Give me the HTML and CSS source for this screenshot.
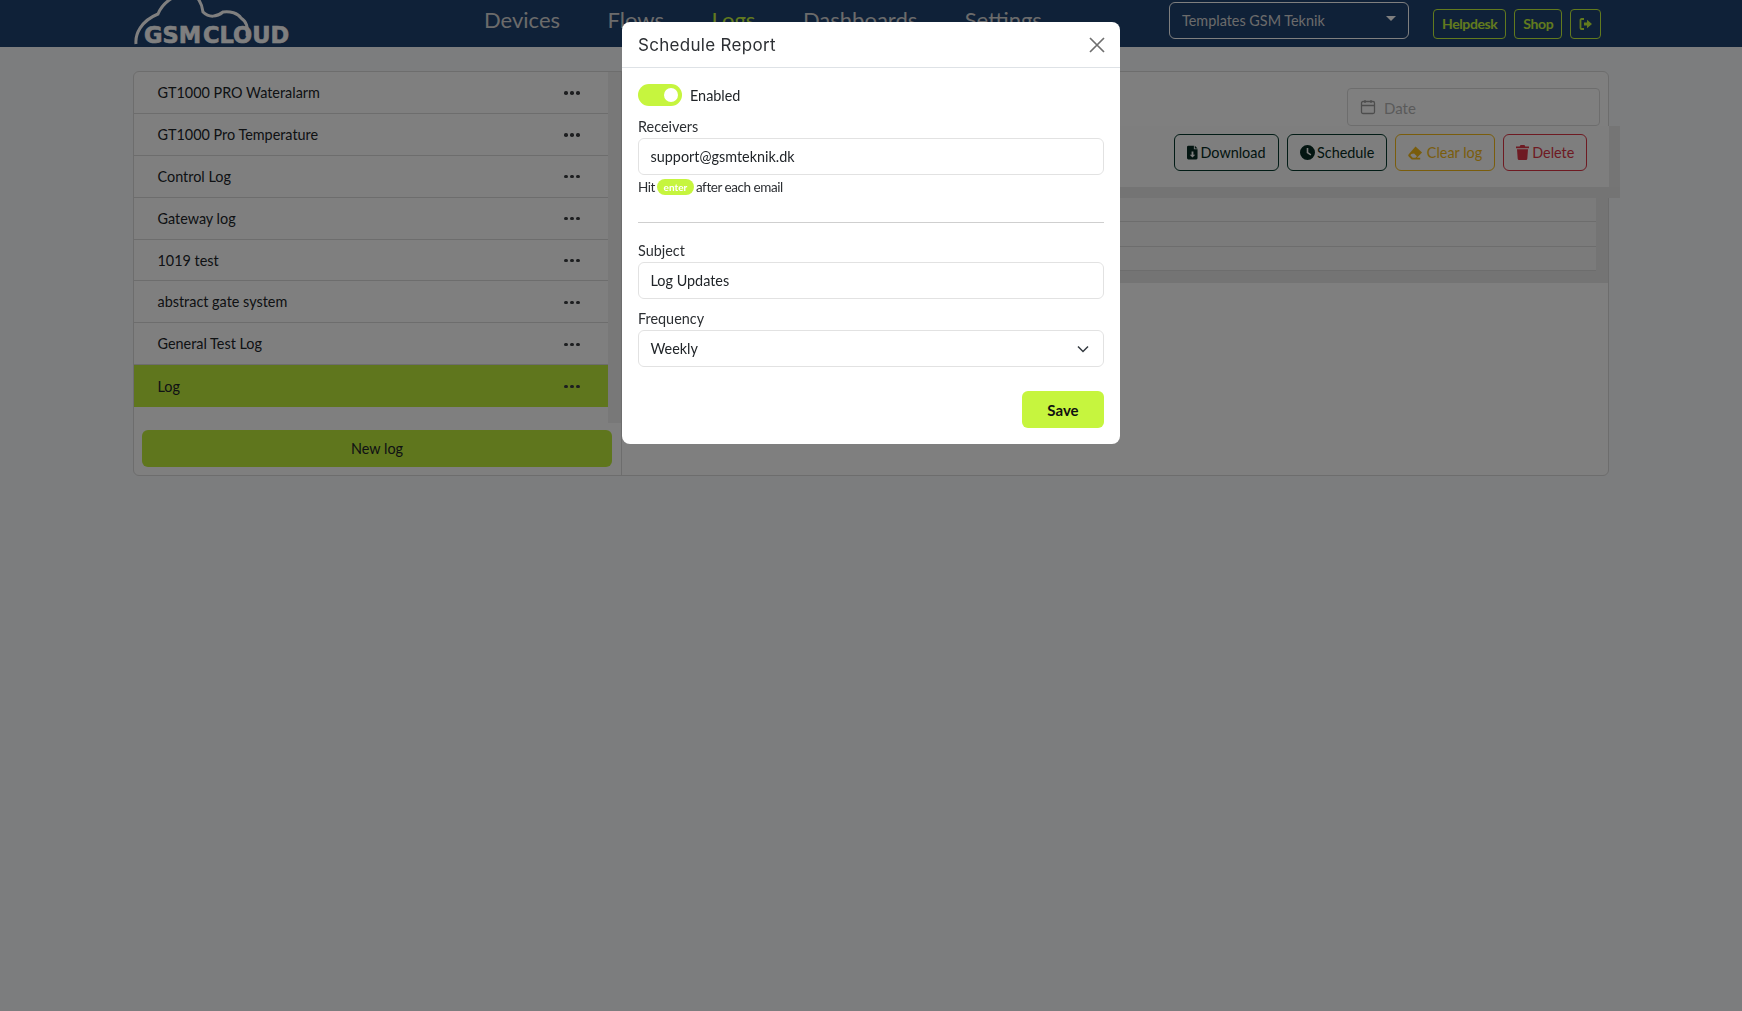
FILE: index.html
```html
<!DOCTYPE html>
<html lang="en">
<head>
<meta charset="utf-8">
<title>Schedule Report</title>
<link rel="stylesheet" href="styles.css">
</head>
<body>
<header class="topbar">
  <div class="logo">
    <svg class="logo-art" width="160" height="47" viewBox="0 0 160 47" aria-label="GSM Cloud">
      <path class="cloud" d="M3 44C2 34 8 21 25 14C29 4 40 -6 55 -6C65 -6 69 4 70 12C76 18 84 17 90 12C97 11 105 13 108 18C114 22 115 27 114 36"/>
      <text class="wordmark" x="11" y="43">GSM</text>
      <text class="wordmark" x="70" y="43">CLOUD</text>
    </svg>
  </div>
  <nav class="mainnav">
    <a>Devices</a><a>Flows</a><a class="active">Logs</a><a>Dashboards</a><a>Settings</a>
  </nav>
  <div class="tenant"><span>Templates GSM Teknik</span><i class="caret"></i></div>
  <div class="toplinks">
    <a class="toplink">Helpdesk</a>
    <a class="toplink">Shop</a>
    <a class="toplink icon">
      <svg width="14" height="14" viewBox="0 0 14 14"><path class="logout-br" d="M5 2H2.5A1 1 0 0 0 1.500 3V11A1 1 0 0 0 2.500 12H5"/><path class="logout-ar" d="M5 5.500H8V2.800L13 7L8 11.200V8.500H5Z"/></svg>
    </a>
  </div>
</header>

<main class="page">
  <section class="card">
    <aside class="sidebar">
      <div class="loglist">
        <ul class="rows">
          <li class="row"><span>GT1000 PRO Wateralarm</span><b class="dots"><i></i><i></i><i></i></b></li>
          <li class="row"><span>GT1000 Pro Temperature</span><b class="dots"><i></i><i></i><i></i></b></li>
          <li class="row"><span>Control Log</span><b class="dots"><i></i><i></i><i></i></b></li>
          <li class="row"><span>Gateway log</span><b class="dots"><i></i><i></i><i></i></b></li>
          <li class="row"><span>1019 test</span><b class="dots"><i></i><i></i><i></i></b></li>
          <li class="row"><span>abstract gate system</span><b class="dots"><i></i><i></i><i></i></b></li>
          <li class="row"><span>General Test Log</span><b class="dots"><i></i><i></i><i></i></b></li>
          <li class="row selected"><span>Log</span><b class="dots"><i></i><i></i><i></i></b></li>
        </ul>
        <div class="scrolltrack"></div>
      </div>
      <button class="newlog">New log</button>
    </aside>
    <div class="content">
      <div class="datebar">
        <div class="datefield">
          <svg width="16" height="16" viewBox="0 0 16 16"><rect class="cal" x="1.500" y="2.500" width="13" height="12" rx="1.500"/><path class="cal" d="M1.500 6.500H14.500M5 1V4M11 1V4"/></svg>
          <span>Date</span>
        </div>
      </div>
      <div class="toolbar">
        <button class="btn dark">
          <svg width="11" height="15" viewBox="0 0 12 15"><path class="fill" d="M1.500 0H7.500V4H11.500V13.500A1.500 1.500 0 0 1 10 15H1.500A1.500 1.500 0 0 1 0 13.500V1.500A1.500 1.500 0 0 1 1.500 0ZM8.500 0L11.500 3H8.500ZM5 6.500V10H3L6 13L9 10H7V6.500Z" fill-rule="evenodd"/></svg>
          Download</button>
        <button class="btn dark">
          <svg width="15" height="15" viewBox="0 0 15 15"><path class="fill" d="M7.500 0A7.500 7.500 0 1 1 7.500 15A7.500 7.500 0 0 1 7.500 0ZM6.700 3V8L10.500 10.500L11.300 9.200L8.300 7.300V3Z" fill-rule="evenodd"/></svg>
          Schedule</button>
        <button class="btn amber">
          <svg width="15" height="14" viewBox="0 0 16 14"><path class="fill" d="M8 0L15 6.500L9.500 12H13V14H4L1 11C0 10 0 9 1 8ZM3.500 8L2.500 9.500L5 12H8L9.500 10.500L6.500 7.500Z" fill-rule="evenodd"/></svg>
          Clear log</button>
        <button class="btn red">
          <svg width="13" height="15" viewBox="0 0 13 15"><path class="fill" d="M4.500 0H8.500L9.300 1.500H13V3.200H0V1.500H3.700ZM1 4.200H12L11.300 13.700A1.400 1.400 0 0 1 9.900 15H3.100A1.400 1.400 0 0 1 1.700 13.700Z"/></svg>
          Delete</button>
      </div>
      <div class="tablewrap">
        <div class="tablerow"></div>
        <div class="tablerow"></div>
        <div class="tablerow"></div>
      </div>
    </div>
  </section>
</main>

<div class="backdrop">
  <div class="modal">
    <div class="modal-head">
      <h2>Schedule Report</h2>
      <svg class="close" width="16" height="16" viewBox="0 0 16 16"><path d="M1 1L15 15M15 1L1 15"/></svg>
    </div>
    <div class="modal-body">
      <div class="switchline">
        <span class="switch"><i></i></span>
        <span>Enabled</span>
      </div>
      <label class="lbl first">Receivers</label>
      <div class="field">support@gsmteknik.dk</div>
      <p class="hint">Hit <span class="pill">enter</span> after each email</p>
      <hr class="rule">
      <label class="lbl subject">Subject</label>
      <div class="field">Log Updates</div>
      <label class="lbl freq">Frequency</label>
      <div class="field select">
        <span>Weekly</span>
        <svg width="12" height="8" viewBox="0 0 12 8"><path d="M1 1.500L6 6.500L11 1.500"/></svg>
      </div>
      <div class="actions"><button class="save">Save</button></div>
    </div>
  </div>
</div>
</body>
</html>
```
FILE: styles.css
```css
* { box-sizing: border-box; }
html, body { margin: 0; height: 100%; }
body {
  background: #f8fafc;
  font-family: "Lato", "Liberation Sans", sans-serif;
  font-size: 14.4px;
  color: #212529;
  overflow: hidden;
}
a { display: block; }
ul { list-style: none; margin: 0; padding: 0; }
button { font-family: inherit; cursor: pointer; }

/* top bar */
.topbar {
  height: 47px;
  background: #1f4270;
  display: flex;
  align-items: flex-start;
  padding-left: 133px;
  overflow: hidden;
}
.logo { width: 351px; height: 47px; flex: none; }
.logo-art { display: block; overflow: hidden; }
.cloud { fill: none; stroke: #fff; stroke-width: 3; }
.wordmark {
  font-family: "DejaVu Sans", "Liberation Sans", sans-serif;
  font-weight: 700;
  font-size: 22.500px;
  fill: #fff;
  stroke: #fff;
  stroke-width: 0.6px;
}
.mainnav {
  display: flex;
  gap: 47.500px;
  font-size: 22px;
  line-height: 40px;
  color: #d6d6d6;
  width: 685px;
  flex: none;
}
.mainnav .active { color: #c5f43c; }
.tenant {
  width: 240px;
  height: 37px;
  margin-top: 2px;
  flex: none;
  border: 1px solid #fff;
  border-radius: 6px;
  display: flex;
  align-items: center;
  justify-content: space-between;
  padding: 0 12px;
  color: #d6d6d6;
  font-size: 14.400px;
}
.caret {
  border-left: 5px solid transparent;
  border-right: 5px solid transparent;
  border-top: 5px solid #fff;
  margin-bottom: 5px;
}
.toplinks { display: flex; gap: 8px; margin: 9px 0 0 24px; }
.toplink {
  height: 30px;
  padding: 0 8px;
  border: 1px solid #c5f43c;
  border-radius: 4px;
  color: #c5f43c;
  font-size: 14px;
  font-weight: 700;
  line-height: 28px;
  letter-spacing: -0.4px;
}
.toplink.icon { display: flex; align-items: center; padding: 0 7.500px; }
.logout-br { fill: none; stroke: #c5f43c; stroke-width: 1.800; }
.logout-ar { fill: #c5f43c; }

/* page */
.page { padding: 24px 133px 0 133px; }
.card {
  height: 405px;
  width: 1476px;
  background: #fff;
  border: 1px solid #dadada;
  border-radius: 6px;
  display: flex;
}
.sidebar { width: 487.500px; flex: none; border-right: 1px solid #dadada; display: flex; flex-direction: column; }
.loglist { display: flex; height: 351px; }
.rows { width: 473.500px; flex: none; }
.row {
  height: 41.900px;
  padding: 0 28px 0 23.500px;
  display: flex;
  align-items: center;
  justify-content: space-between;
  border-bottom: 1px solid #dadada;
}
.row.selected { background: #bfec3b; border-bottom: 0; }
.dots { display: flex; gap: 2.500px; margin-top: 1px; }
.dots i { width: 3.500px; height: 3.500px; border-radius: 50%; background: #3a3d40; }
.scrolltrack { flex: 1; background: #f1f1f1; }
.newlog {
  width: 470px;
  height: 37px;
  margin: 7px 0 0 8px;
  border: 0;
  border-radius: 6px;
  background: #bfec3b;
  font-size: 14.400px;
  color: #212529;
  position: relative;
}

.content { flex: 1; min-width: 0; }
.datebar { display: flex; justify-content: flex-end; padding: 16px 8px 0 0; height: 54px; }
.datefield {
  width: 253px;
  height: 38px;
  border: 1px solid #dadada;
  border-radius: 4px;
  display: flex;
  align-items: center;
  gap: 8px;
  padding: 0 12px;
  color: #b5b5b5;
  font-size: 15px;
}
.datefield span { padding-top: 2px; }
.cal { fill: none; stroke: #9a9a9a; stroke-width: 1.300; }
.toolbar {
  height: 61px;
  margin-right: -12px;
  background: linear-gradient(to right, #fcfcfc 987px, #ebebeb 987px);
  display: flex;
  gap: 8px;
  padding: 8px 0 0 552.500px;
}
.btn {
  height: 37px;
  border: 1px solid;
  border-radius: 6px;
  background: transparent;
  font-size: 14.400px;
  padding: 0 12px;
  display: flex;
  align-items: center;
  gap: 2.500px;
  white-space: nowrap;
}
.btn .fill { fill: currentColor; }
.btn.dark { color: #062b22; border-color: #04392c; }
.btn.amber { color: #f4bb18; border-color: #f4bb18; gap: 3.500px; }
.btn.red { color: #dc3545; border-color: #dc3545; gap: 3px; }
.tablewrap {
  margin-right: -12px;
  height: 96px;
  padding: 11px 24px 0 0;
  background:
    linear-gradient(#e8e8e8, #e8e8e8) top / 100% 11px no-repeat,
    linear-gradient(#e8e8e8, #e8e8e8) left / calc(100% - 12px) 100% no-repeat;
}
.tablerow { height: 24.300px; background: #f7f7f7; border-bottom: 1px solid #dadada; }

/* modal */
.backdrop {
  position: fixed;
  inset: 0;
  background: rgba(0, 0, 0, 0.5);
  padding: 22px 0 0 622px;
}
.modal {
  width: 498px;
  height: 422px;
  background: #fff;
  border-radius: 8px;
  overflow: hidden;
}
.modal-head {
  height: 46px;
  border-bottom: 1px solid #dee2e6;
  padding: 0 15px 0 16px;
  display: flex;
  align-items: center;
  justify-content: space-between;
}
.modal-head h2 {
  margin: 0;
  font-family: "Inter", "Liberation Sans", sans-serif;
  font-size: 17px;
  font-weight: 400;
  letter-spacing: 0.3px;
  color: #2c2f33;
}
.close path { fill: none; stroke: #6f6f6f; stroke-width: 1.700; }
.modal-body { padding: 16px 16px 0; }
.switchline { display: flex; align-items: center; gap: 8px; height: 22px; }
.switch {
  width: 44px;
  height: 22px;
  border-radius: 11px;
  background: #c6f53e;
  display: flex;
  align-items: center;
  justify-content: flex-end;
  padding-right: 4px;
}
.switch i { width: 14px; height: 14px; border-radius: 50%; background: #fff; }
.lbl { display: block; color: #2c2f33; }
.lbl.first { margin-top: 11px; height: 21px; line-height: 20px; }
.lbl.subject { margin-top: 17px; height: 22px; line-height: 22px; }
.lbl.freq { margin-top: 10px; height: 21px; line-height: 20px; }
.field {
  height: 37px;
  border: 1px solid #e2e2e2;
  border-radius: 6px;
  padding: 0 14px 0 11.500px;
  display: flex;
  align-items: center;
  color: #212529;
}
.select { justify-content: space-between; }
.select path { fill: none; stroke: #343a40; stroke-width: 1.500; }
.hint {
  margin: 2px 0 0;
  height: 21px;
  padding-bottom: 2px;
  display: flex;
  align-items: center;
  gap: 2px;
  font-size: 13.500px;
  letter-spacing: -0.45px;
  color: #2c2f33;
}
.pill {
  background: #c6f53e;
  color: #fff;
  font-size: 10px;
  font-weight: 700;
  width: 37px;
  height: 16px;
  border-radius: 8px;
  text-align: center;
  line-height: 17px;
  letter-spacing: 0;
}
.rule { margin: 24px 0 0; border: 0; border-top: 1px solid #cfcfcf; }
.actions { display: flex; justify-content: flex-end; margin-top: 24px; }
.save {
  width: 82px;
  height: 37px;
  border: 0;
  border-radius: 6px;
  background: #c6f53e;
  font-size: 15px;
  font-weight: 700;
  color: #111;
}
```
